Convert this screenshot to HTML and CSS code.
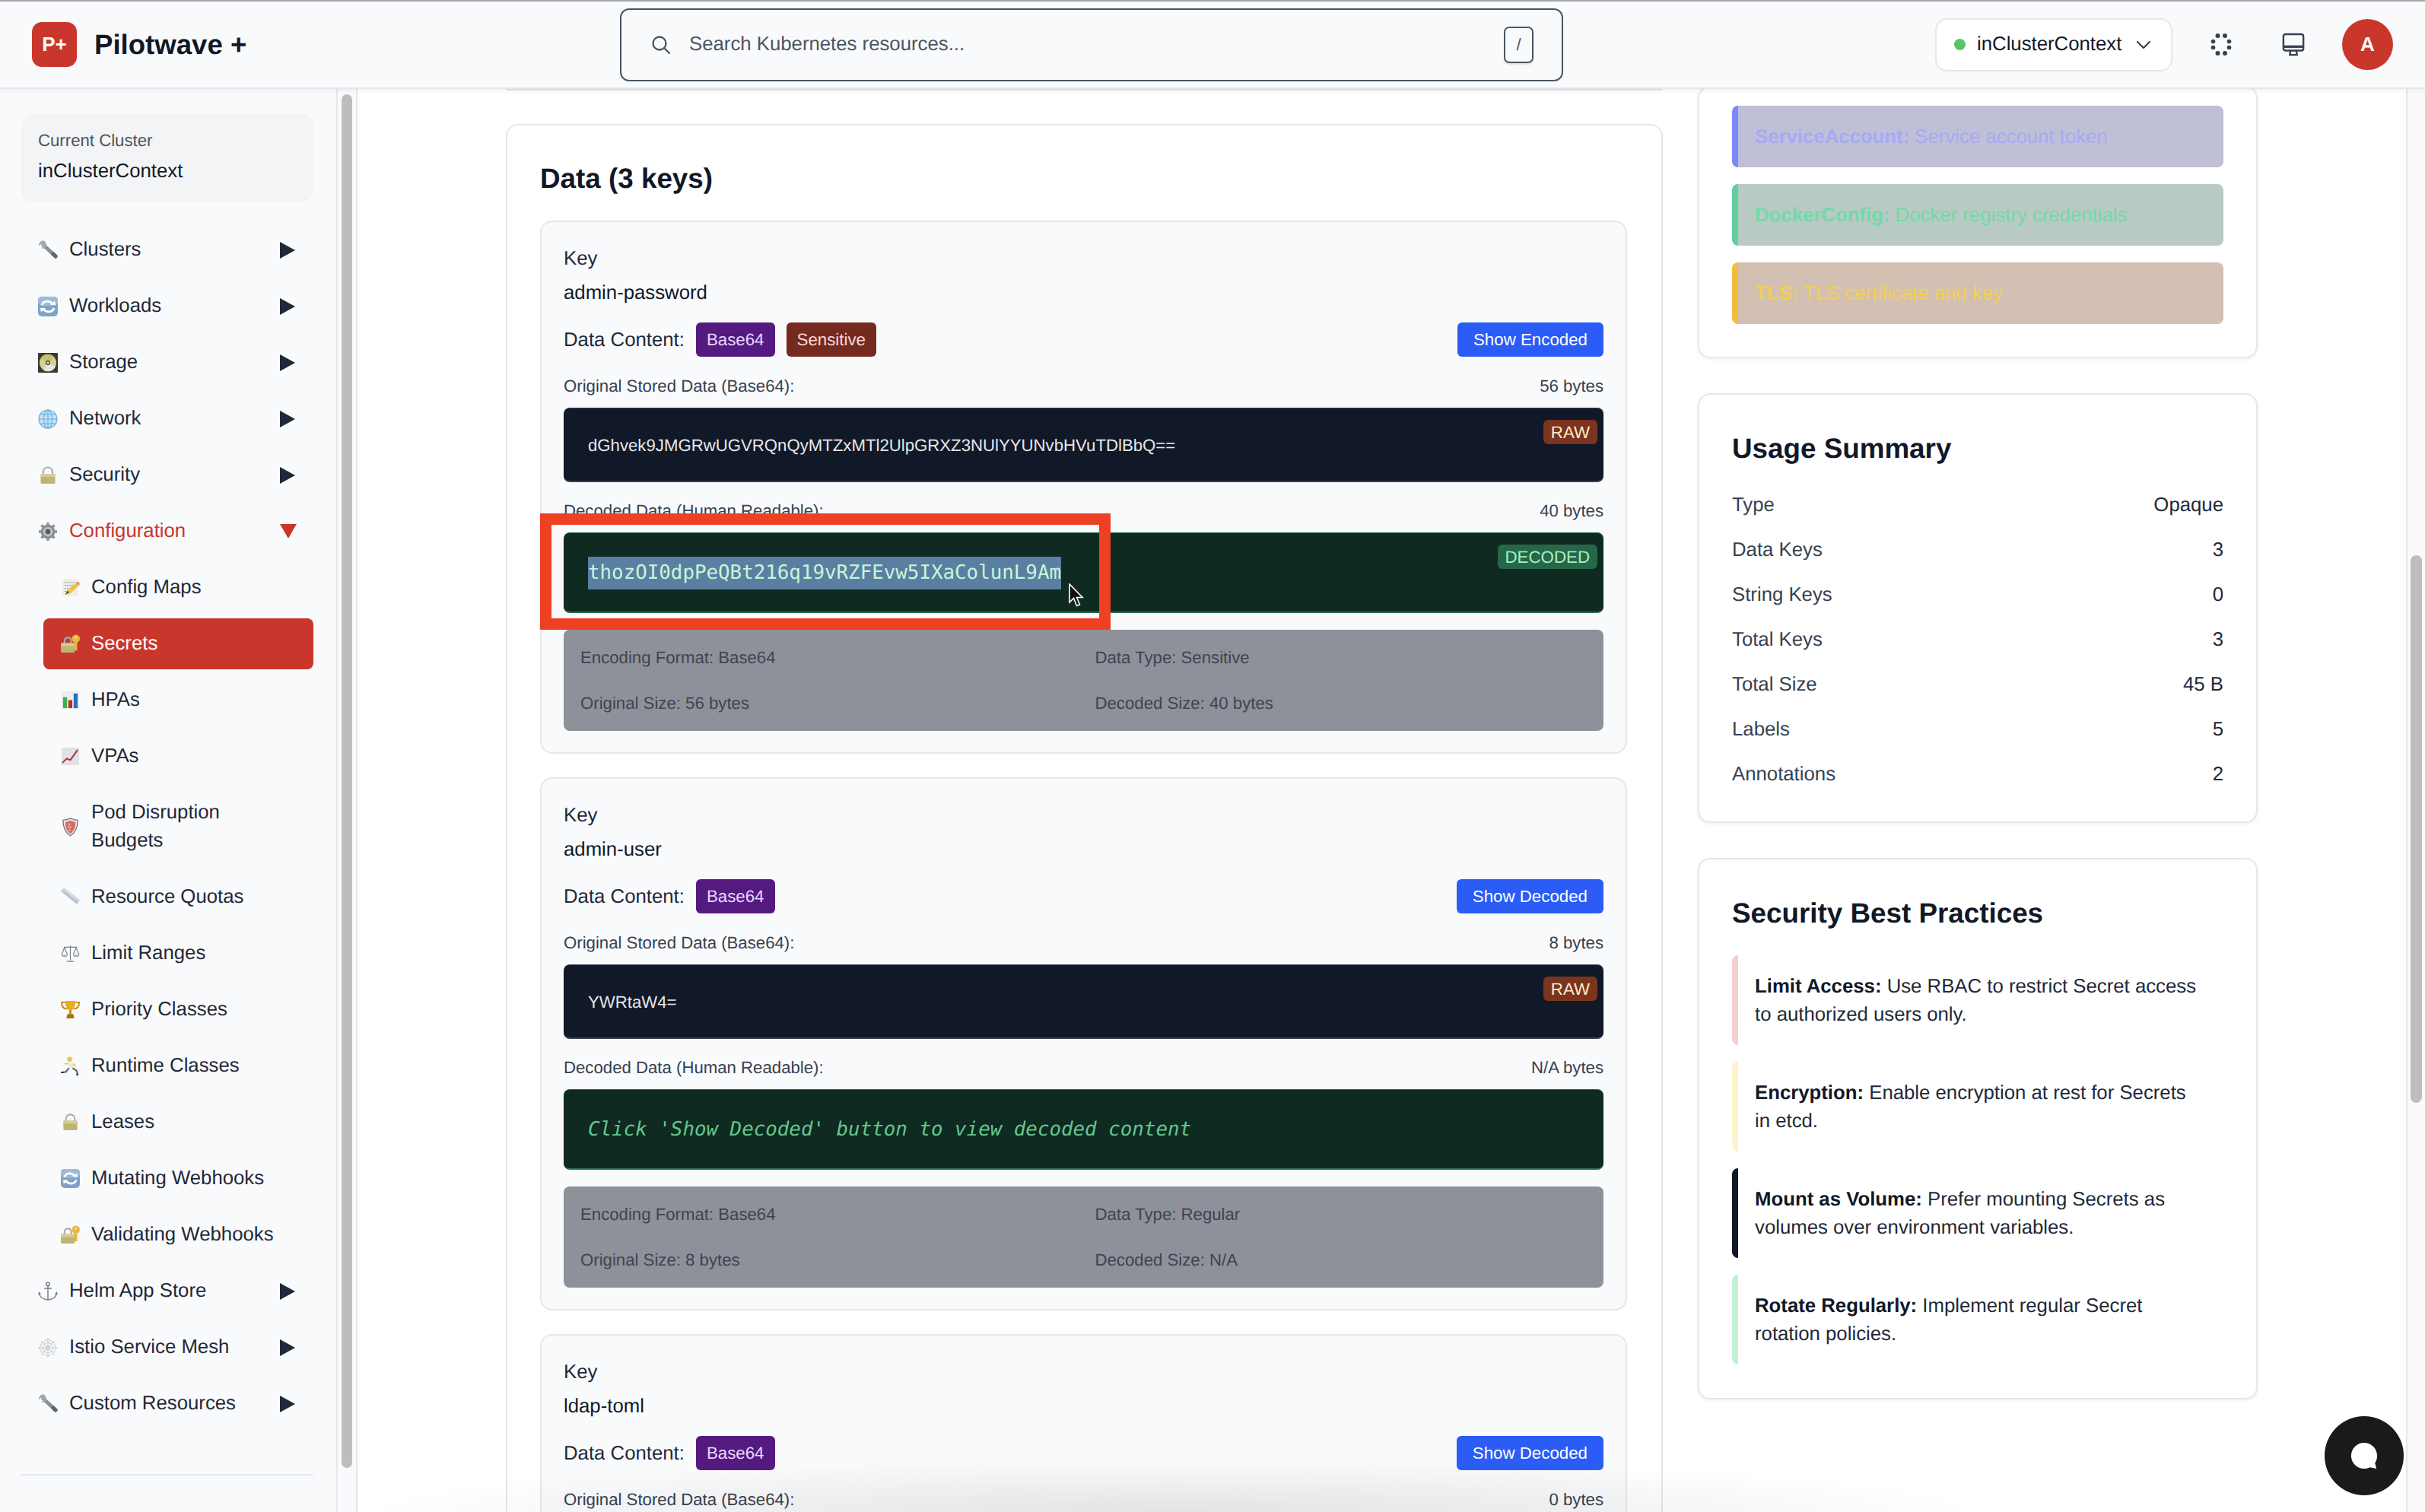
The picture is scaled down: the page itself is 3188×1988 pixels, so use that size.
FILE: index.html
```html
<!DOCTYPE html>
<html lang="en">
<head>
<meta charset="utf-8">
<title>Pilotwave + Secrets</title>
<link rel="stylesheet" href="styles.css">
</head>
<body>
<svg class="defs" aria-hidden="true">
  <symbol id="i-wrench" viewBox="0 0 26 26"><path d="M7 6 L23 21" stroke="#8b9097" stroke-width="5" stroke-linecap="round"/><path d="M8.500 .8 C4.500 -.4 .4 3 1 7.500 L4 4.800 L7.200 7.400 L4.500 10.400 C8.500 11.600 12 8 10.600 4.600 Z" fill="#a3a9af"/><path d="M20 18 L23 21" stroke="#5f646b" stroke-width="5" stroke-linecap="round"/></symbol>
  <symbol id="i-sync" viewBox="0 0 26 26"><rect x="0" y="0" width="26" height="26" rx="5" fill="#7fa2c8"/><rect x="0" y="0" width="26" height="12" rx="5" fill="#9dbad8"/><path d="M5 11 C7 5 15 4.500 19 9.500 M21 15 C19 21 11 21.500 7 16.500" stroke="#fff" stroke-width="2.800" fill="none"/><path d="M16 11 H23 L22 5.500 Z M10 15 H3 L4 20.500 Z" fill="#fff"/></symbol>
  <symbol id="i-disc" viewBox="0 0 26 26"><rect x="0" y="0" width="26" height="26" rx="1" fill="#3a3a34"/><circle cx="13" cy="13" r="11" fill="#d8cf9c"/><path d="M13 13 L3 8 A11 11 0 0 1 22 6.500 Z" fill="#c9c06a"/><path d="M13 13 L23 18 A11 11 0 0 1 7 22.500 Z" fill="#e8e6da"/><circle cx="13" cy="13" r="3.200" fill="#6b6a55"/><circle cx="13" cy="13" r="1.200" fill="#eee"/></symbol>
  <symbol id="i-globe" viewBox="0 0 26 26"><circle cx="13" cy="13" r="12" fill="#c3e2f3"/><g fill="none" stroke="#6ab0d9" stroke-width="1.200"><circle cx="13" cy="13" r="12"/><ellipse cx="13" cy="13" rx="5.500" ry="12"/><path d="M13 1 V25 M1 13 H25 M3 7 H23 M3 19 H23"/></g></symbol>
  <symbol id="i-lock" viewBox="0 0 26 26"><path d="M7 12 V8.500 C7 .5 19 .5 19 8.500 V12" fill="none" stroke="#a9adb0" stroke-width="2.200"/><rect x="3.500" y="11" width="19" height="13" rx="1.500" fill="#bdb574"/><rect x="3.500" y="11" width="19" height="4" rx="1.500" fill="#d4cd95"/></symbol>
  <symbol id="i-gear" viewBox="0 0 26 26"><circle cx="13" cy="13" r="9.500" fill="#8d9196"/><g stroke="#8d9196" stroke-width="3.400"><path d="M13 1 V25 M1 13 H25 M4.500 4.500 L21.500 21.500 M21.500 4.500 L4.500 21.500"/></g><circle cx="13" cy="13" r="6" fill="#c4c7ca"/><circle cx="13" cy="13" r="3.400" fill="#55585c"/></symbol>
  <symbol id="i-memo" viewBox="0 0 26 26"><rect x="2" y="1" width="21" height="24" fill="#eeeeea"/><path d="M5 6 H19 M5 10 H17 M5 14 H12 M5 18 H9" stroke="#9a9a96" stroke-width="1.200" stroke-dasharray="2 1"/><path d="M6 23 L9 17 L21 6 L25 10 L13 21 Z" fill="#eec344"/><path d="M21 6 L25 10 L26 8 L23.500 5 Z" fill="#d9787a"/><path d="M6 23 L9 17 L11 20 Z" fill="#4a4a44"/></symbol>
  <symbol id="i-lockkey" viewBox="0 0 26 26"><path d="M5 13 V9 C5 3 14 3 14 9 V13" fill="none" stroke="#a9adb0" stroke-width="2.200"/><rect x="0" y="12" width="19" height="13" rx="1.500" fill="#bdb574"/><rect x="0" y="12" width="19" height="4" rx="1.500" fill="#d4cd95"/><circle cx="20.500" cy="6" r="5.500" fill="#eab53c"/><rect x="18.700" y="8" width="3.600" height="14" fill="#eab53c"/><circle cx="20.500" cy="4.400" r="1.400" fill="#f8e9b8"/></symbol>
  <symbol id="i-bars" viewBox="0 0 26 26"><rect x="1" y="1" width="24" height="24" fill="#eceef0"/><rect x="3" y="9" width="5.500" height="15" fill="#3fae49"/><rect x="10.200" y="13" width="5.500" height="11" fill="#b5302a"/><rect x="17.500" y="4" width="5.500" height="20" fill="#2f6cc0"/></symbol>
  <symbol id="i-line" viewBox="0 0 26 26"><rect x="1" y="1" width="24" height="24" fill="#dfe2e6"/><path d="M2 22 L8 16 L13 18 L23 4" fill="none" stroke="#b5302a" stroke-width="2"/></symbol>
  <symbol id="i-shield" viewBox="0 0 26 26"><path d="M13 1 C17 3 20 3.500 23 3.500 C23 13 21 20 13 25 C5 20 3 13 3 3.500 C6 3.500 9 3 13 1 Z" fill="#e9e9e9" stroke="#74777b" stroke-width="1.400"/><path d="M13 4 C16 5.500 18 6 20 6 C20 13 18.500 18 13 22 C7.500 18 6 13 6 6 C8 6 10 5.500 13 4 Z" fill="#d96c60"/><path d="M10 9 H13 M10 13 H14 M11 17 H13" stroke="#f1d8d4" stroke-width="1.400"/></symbol>
  <symbol id="i-ruler" viewBox="0 0 26 26"><path d="M0 5 L4 0 L26 17 L22 23 Z" fill="#b8c3d2"/><path d="M4 0 L26 17 L24 19.500 L2 2.500 Z" fill="#d4dae3"/></symbol>
  <symbol id="i-scale" viewBox="0 0 26 26"><g fill="none" stroke="#7c8086" stroke-width="1.200"><path d="M13 2 V23 M4 4.500 H22 M8 24 H18 M5 5 L1 15 M5 5 L9 15 M21 5 L17 15 M21 5 L25 15"/></g><path d="M.5 15 H9.500 C9 19 1 19 .5 15 Z M16.500 15 H25.500 C25 19 17 19 16.500 15 Z" fill="#a9adb2"/></symbol>
  <symbol id="i-trophy" viewBox="0 0 26 26"><path d="M6 3 H1 C1 9 4 11.500 8 12 M20 3 H25 C25 9 22 11.500 18 12" fill="none" stroke="#c08a17" stroke-width="2"/><path d="M6 1 H20 C20 10 17 14 13 14.500 C9 14 6 10 6 1 Z" fill="#e8ae22"/><rect x="11.500" y="14" width="3" height="5" fill="#c08a17"/><path d="M7.500 25 L9 19 H17 L18.500 25 Z" fill="#a57412"/></symbol>
  <symbol id="i-run" viewBox="0 0 26 26"><circle cx="12" cy="3.800" r="3.400" fill="#eec34e"/><path d="M9 8 L17 9 L17 16 L11 17 Z" fill="#e8e8e4"/><path d="M10 10 L5 10 M17 10 L20 14" stroke="#eec34e" stroke-width="2"/><path d="M11 16 L7 21 L1 22 M16 16 L21 19 L23 24" fill="none" stroke="#5a6170" stroke-width="2.200"/><path d="M0 22 H4 M21 25 H24" stroke="#2f3a55" stroke-width="2"/></symbol>
  <symbol id="i-anchor" viewBox="0 0 26 26"><g fill="none" stroke="#7a7f85" stroke-width="1.500"><circle cx="13" cy="3.500" r="2.200"/><path d="M13 6 V24 M8 9 H18"/><path d="M1.500 15 C2 21 8 24 13 24 C18 24 24 21 24.500 15"/></g><path d="M0 17 L1.500 13 L4 17 Z M22 17 L24.500 13 L26 17 Z" fill="#7a7f85"/></symbol>
  <symbol id="i-web" viewBox="0 0 26 26"><g fill="none" stroke="#c5c9cd" stroke-width="1"><path d="M13 0 V26 M0 13 H26 M4 4 L22 22 M22 4 L4 22"/><path d="M13 2 L20.500 5.500 L24 13 L20.500 20.500 L13 24 L5.500 20.500 L2 13 L5.500 5.500 Z"/><path d="M13 6 L18 8 L20 13 L18 18 L13 20 L8 18 L6 13 L8 8 Z"/><path d="M13 10 L15 11 L16 13 L15 15 L13 16 L11 15 L10 13 L11 11 Z"/></g></symbol>
</svg>

<div class="app">
  <header class="topbar">
    <div class="brand">
      <div class="logo">P+</div>
      <div class="brand-name">Pilotwave +</div>
    </div>
    <div class="search">
      <svg class="search-icon" viewBox="0 0 26 26" fill="none" stroke="#4b5563" stroke-width="2.300" stroke-linecap="round"><circle cx="11" cy="11" r="8.500"/><path d="M17.500 17.500 L24 24"/></svg>
      <span class="search-text">Search Kubernetes resources...</span>
      <span class="kbd">/</span>
    </div>
    <div class="top-right">
      <div class="ctx">
        <span class="ctx-dot"></span>
        <span class="ctx-name">inClusterContext</span>
        <svg class="ctx-chev" viewBox="0 0 20 12" fill="none" stroke="#374151" stroke-width="2.200" stroke-linecap="round" stroke-linejoin="round"><path d="M2 2 L10 10 L18 2"/></svg>
      </div>
      <div class="icon-btn">
        <svg class="tb-icon" viewBox="0 0 30 30" fill="#374151"><circle cx="10.500" cy="3.500" r="3"/><circle cx="20" cy="3.500" r="3"/><circle cx="4.500" cy="11" r="2.800"/><circle cx="25.500" cy="11" r="2.800"/><circle cx="4.500" cy="19" r="2.800"/><circle cx="25.500" cy="19" r="2.800"/><circle cx="10.500" cy="26.500" r="3"/><circle cx="20" cy="26.500" r="3"/></svg>
      </div>
      <div class="icon-btn">
        <svg class="tb-icon" viewBox="0 0 32 32" fill="none" stroke="#374151" stroke-width="2.600"><rect x="2" y="1.500" width="28" height="23" rx="3"/><path d="M2 19 H30" stroke-width="3.500"/><path d="M12 24 L11 30.500 H21 L20 24" /></svg>
      </div>
      <div class="avatar">A</div>
    </div>
  </header>

  <div class="body">
    <aside class="sidebar">
      <div class="side-col">
        <div class="cluster-card">
          <div class="cluster-label">Current Cluster</div>
          <div class="cluster-name">inClusterContext</div>
        </div>
        <nav class="nav">
          <a class="nav-item"><svg class="ico"><use href="#i-wrench"/></svg><span class="nav-label">Clusters</span><span class="caret"></span></a>
          <a class="nav-item"><svg class="ico"><use href="#i-sync"/></svg><span class="nav-label">Workloads</span><span class="caret"></span></a>
          <a class="nav-item"><svg class="ico"><use href="#i-disc"/></svg><span class="nav-label">Storage</span><span class="caret"></span></a>
          <a class="nav-item"><svg class="ico"><use href="#i-globe"/></svg><span class="nav-label">Network</span><span class="caret"></span></a>
          <a class="nav-item"><svg class="ico"><use href="#i-lock"/></svg><span class="nav-label">Security</span><span class="caret"></span></a>
          <a class="nav-item open"><svg class="ico"><use href="#i-gear"/></svg><span class="nav-label">Configuration</span><span class="caret-down"></span></a>
          <a class="nav-item sub"><svg class="ico"><use href="#i-memo"/></svg><span class="nav-label">Config Maps</span></a>
          <a class="nav-item sub active"><svg class="ico"><use href="#i-lockkey"/></svg><span class="nav-label">Secrets</span></a>
          <a class="nav-item sub"><svg class="ico"><use href="#i-bars"/></svg><span class="nav-label">HPAs</span></a>
          <a class="nav-item sub"><svg class="ico"><use href="#i-line"/></svg><span class="nav-label">VPAs</span></a>
          <a class="nav-item sub"><svg class="ico"><use href="#i-shield"/></svg><span class="nav-label">Pod Disruption Budgets</span></a>
          <a class="nav-item sub"><svg class="ico"><use href="#i-ruler"/></svg><span class="nav-label">Resource Quotas</span></a>
          <a class="nav-item sub"><svg class="ico"><use href="#i-scale"/></svg><span class="nav-label">Limit Ranges</span></a>
          <a class="nav-item sub"><svg class="ico"><use href="#i-trophy"/></svg><span class="nav-label">Priority Classes</span></a>
          <a class="nav-item sub"><svg class="ico"><use href="#i-run"/></svg><span class="nav-label">Runtime Classes</span></a>
          <a class="nav-item sub"><svg class="ico"><use href="#i-lock"/></svg><span class="nav-label">Leases</span></a>
          <a class="nav-item sub"><svg class="ico"><use href="#i-sync"/></svg><span class="nav-label">Mutating Webhooks</span></a>
          <a class="nav-item sub"><svg class="ico"><use href="#i-lockkey"/></svg><span class="nav-label">Validating Webhooks</span></a>
          <a class="nav-item"><svg class="ico"><use href="#i-anchor"/></svg><span class="nav-label">Helm App Store</span><span class="caret"></span></a>
          <a class="nav-item"><svg class="ico"><use href="#i-web"/></svg><span class="nav-label">Istio Service Mesh</span><span class="caret"></span></a>
          <a class="nav-item"><svg class="ico"><use href="#i-wrench"/></svg><span class="nav-label">Custom Resources</span><span class="caret"></span></a>
        </nav>
        <div class="side-divider"></div>
      </div>
      <div class="side-track"><div class="side-thumb"></div></div>
    </aside>

    <main class="main">
      <div class="left-col">
        <div class="stub-card"></div>
        <section class="data-card">
          <h2 class="card-title data-title">Data (3 keys)</h2>

          <article class="key-card">
            <div class="key-label">Key</div>
            <div class="key-value">admin-password</div>
            <div class="content-row">
              <span class="content-label">Data Content:</span>
              <span class="badge purple">Base64</span>
              <span class="badge maroon">Sensitive</span>
              <button class="toggle">Show Encoded</button>
            </div>
            <div class="meta-row"><span>Original Stored Data (Base64):</span><span>56 bytes</span></div>
            <div class="code raw">dGhvek9JMGRwUGVRQnQyMTZxMTl2UlpGRXZ3NUlYYUNvbHVuTDlBbQ==<span class="tag tag-raw">RAW</span></div>
            <div class="meta-row meta-decoded"><span>Decoded Data (Human Readable):</span><span>40 bytes</span></div>
            <div class="code decoded"><span class="selected">thozOI0dpPeQBt216q19vRZFEvw5IXaColunL9Am</span><span class="tag tag-decoded">DECODED</span></div>
            <div class="info">
              <span>Encoding Format: Base64</span><span>Data Type: Sensitive</span>
              <span>Original Size: 56 bytes</span><span>Decoded Size: 40 bytes</span>
            </div>
            <div class="highlight"></div>
            <svg class="cursor" viewBox="0 0 22 32"><path d="M2 1 V25 L7.500 19.500 L11.500 29.500 L15.500 28 L11.500 18.500 L19 18.500 Z" fill="#111" stroke="#fff" stroke-width="1.600"/></svg>
          </article>

          <article class="key-card">
            <div class="key-label">Key</div>
            <div class="key-value">admin-user</div>
            <div class="content-row">
              <span class="content-label">Data Content:</span>
              <span class="badge purple">Base64</span>
              <button class="toggle">Show Decoded</button>
            </div>
            <div class="meta-row"><span>Original Stored Data (Base64):</span><span>8 bytes</span></div>
            <div class="code raw">YWRtaW4=<span class="tag tag-raw">RAW</span></div>
            <div class="meta-row meta-decoded"><span>Decoded Data (Human Readable):</span><span>N/A bytes</span></div>
            <div class="code decoded"><em class="placeholder">Click 'Show Decoded' button to view decoded content</em></div>
            <div class="info">
              <span>Encoding Format: Base64</span><span>Data Type: Regular</span>
              <span>Original Size: 8 bytes</span><span>Decoded Size: N/A</span>
            </div>
          </article>

          <article class="key-card">
            <div class="key-label">Key</div>
            <div class="key-value">ldap-toml</div>
            <div class="content-row">
              <span class="content-label">Data Content:</span>
              <span class="badge purple">Base64</span>
              <button class="toggle">Show Decoded</button>
            </div>
            <div class="meta-row"><span>Original Stored Data (Base64):</span><span>0 bytes</span></div>
          </article>
        </section>
      </div>

      <div class="right-col">
        <section class="side-card types-card">
          <div class="type-item violet"><b>ServiceAccount:</b> Service account token</div>
          <div class="type-item green"><b>DockerConfig:</b> Docker registry credentials</div>
          <div class="type-item amber"><b>TLS:</b> TLS certificate and key</div>
        </section>
        <section class="side-card">
          <h2 class="card-title">Usage Summary</h2>
          <dl class="summary">
            <div class="sum-row"><dt>Type</dt><dd>Opaque</dd></div>
            <div class="sum-row"><dt>Data Keys</dt><dd>3</dd></div>
            <div class="sum-row"><dt>String Keys</dt><dd>0</dd></div>
            <div class="sum-row"><dt>Total Keys</dt><dd>3</dd></div>
            <div class="sum-row"><dt>Total Size</dt><dd>45 B</dd></div>
            <div class="sum-row"><dt>Labels</dt><dd>5</dd></div>
            <div class="sum-row"><dt>Annotations</dt><dd>2</dd></div>
          </dl>
        </section>
        <section class="side-card">
          <h2 class="card-title">Security Best Practices</h2>
          <div class="tips">
            <div class="tip pink"><b>Limit Access:</b> Use RBAC to restrict Secret access to authorized users only.</div>
            <div class="tip cream"><b>Encryption:</b> Enable encryption at rest for Secrets in etcd.</div>
            <div class="tip dark"><b>Mount as Volume:</b> Prefer mounting Secrets as volumes over environment variables.</div>
            <div class="tip mint"><b>Rotate Regularly:</b> Implement regular Secret rotation policies.</div>
          </div>
        </section>
      </div>
    </main>

    <div class="main-track"><div class="main-thumb"></div></div>
  </div>

  <div class="bottom-shade"></div>
  <div class="chat">
    <svg class="chat-icon" viewBox="0 0 40 40"><path d="M20 2 C30 2 38 10 38 20 C38 24 37 27 35 30 L37 38 L28 36 C26 37 23 38 20 38 C10 38 2 30 2 20 C2 10 10 2 20 2 Z" fill="#fff"/></svg>
  </div>
</div>
</body>
</html>
```

FILE: styles.css
```css
* { box-sizing: border-box; }
html, body { margin: 0; height: 100%; overflow: hidden; }
body { font-family: "Liberation Sans", Arial, sans-serif; font-size: 25.75px; line-height: 37px; color: #111827; background: #fff; text-rendering: geometricPrecision; }
.defs { position: absolute; width: 0; height: 0; }
.app { position: relative; height: 100vh; display: flex; flex-direction: column; overflow: hidden; }

/* Top bar */
.topbar { position: relative; z-index: 3; flex: none; height: 117px; display: flex; align-items: center; background: #f9fafb; border-top: 2px solid #a3a6ab; border-bottom: 2px solid #e5e7eb; padding: 0 42px; box-shadow: 0 3px 6px rgba(0,0,0,.05); }
.brand { width: 773px; display: flex; align-items: center; gap: 23px; flex: none; }
.logo { width: 59px; height: 59px; border-radius: 13px; background: #c9372c; color: #fff; font-weight: 700; font-size: 26px; display: flex; align-items: center; justify-content: center; }
.brand-name { font-size: 36.6px; font-weight: 700; color: #111827; }
.search { width: 1240px; height: 96px; flex: none; display: flex; align-items: center; padding: 0 37px 0 39px; border: 2px solid #4b5563; border-radius: 12px; background: #f9fafb; }
.search-icon { width: 26px; height: 26px; flex: none; }
.search-text { margin-left: 24px; color: #4b5563; flex: 1; }
.kbd { width: 39px; height: 48px; border: 2px solid #4b5563; border-radius: 7px; display: flex; align-items: center; justify-content: center; font-size: 22px; color: #4b5563; box-shadow: 0 2px 2px rgba(0,0,0,.1); }
.top-right { margin-left: auto; display: flex; align-items: center; gap: 33px; }
.ctx { width: 312px; height: 70px; display: flex; align-items: center; padding-left: 23px; background: #fff; border: 2px solid #e5e7eb; border-radius: 16px; }
.ctx-dot { width: 15px; height: 15px; border-radius: 50%; background: #58c468; flex: none; }
.ctx-name { margin-left: 15px; color: #111827; }
.ctx-chev { width: 20px; height: 12px; margin-left: 19px; flex: none; }
.icon-btn { width: 62px; display: flex; justify-content: center; }
.tb-icon { width: 30px; height: 31px; display: block; }
.avatar { width: 67px; height: 67px; border-radius: 50%; background: #c9372c; color: #fff; font-weight: 700; font-size: 26px; display: flex; align-items: center; justify-content: center; }

/* Shell */
.body { flex: 1; min-height: 0; display: flex; }

/* Sidebar */
.sidebar { width: 470px; flex: none; display: flex; background: #f9fafb; overflow: hidden; }
.side-col { width: 444px; flex: none; padding: 32px 30px 0 28px; border-right: 2px solid #e5e7eb; height: 100%; overflow: hidden; }
.cluster-card { height: 117px; padding: 17px 22px; background: #f3f4f6; border-radius: 16px; }
.cluster-label { font-size: 22.2px; line-height: 37px; color: #4b5563; }
.cluster-name { line-height: 45px; color: #111827; }
.nav { margin-top: 29px; display: flex; flex-direction: column; gap: 7px; }
.nav-item { display: flex; align-items: center; padding: 15px 24px 15px 22px; border-radius: 8px; color: #1f2937; }
.nav-item.sub { margin-left: 29px; padding: 15px 48px 15px 23px; }
.nav-item.open { color: #c9372c; }
.nav-item.active { background: #c9372c; color: #fff; }
.ico { width: 26px; height: 26px; flex: none; margin-right: 15px; }
.nav-item.sub .ico { width: 25px; height: 25px; }
.nav-label { flex: 1; }
.caret { width: 0; height: 0; border-left: 20px solid #1f2937; border-top: 11px solid transparent; border-bottom: 11px solid transparent; flex: none; }
.caret-down { width: 0; height: 0; border-top: 19px solid #c9372c; border-left: 11px solid transparent; border-right: 11px solid transparent; flex: none; margin-right: -2px; }
.side-divider { height: 2px; background: #e5e7eb; margin-top: 59px; }
.side-track { width: 26px; flex: none; border-right: 2px solid #e5e7eb; background: #f9fafb; padding: 7px 0 0 5px; }
.side-thumb { width: 14px; height: 1806px; border-radius: 7px; background: #bdbdbd; }

/* Main */
.main { flex: 1; min-width: 0; display: flex; gap: 46px; padding-left: 195px; overflow: hidden; background: #fff; }
.left-col { width: 1521px; flex: none; display: flex; flex-direction: column; }
.stub-card { height: 2px; background: #e5e7eb; border-radius: 0 0 16px 16px; margin-bottom: 44px; flex: none; }
.data-card { flex: none; padding: 48px 45px 0 43px; background: #fff; border: 2px solid #e5e7eb; border-bottom: 0; border-radius: 16px 16px 0 0; }
.card-title { margin: 0; font-size: 36.8px; line-height: 44px; font-weight: 700; color: #111827; }
.data-title { margin-bottom: 33px; }
.key-card { position: relative; margin-bottom: 31px; padding: 30px 29px 28px; background: #f9fafb; border: 2px solid #e5e7eb; border-radius: 16px; }
.key-label { line-height: 37px; color: #1f2937; }
.key-value { margin-top: 8px; line-height: 37px; color: #111827; }
.content-row { margin-top: 20px; height: 45px; display: flex; align-items: center; gap: 15px; }
.content-label { padding-top: 2px; color: #1f2937; }
.badge { height: 45px; padding: 0 14px; border-radius: 6px; display: flex; align-items: center; font-size: 22.3px; }
.purple { background: #551a80; color: #e9d8fd; }
.maroon { background: #742a1f; color: #fed7d7; }
.toggle { margin-left: auto; height: 45px; padding: 0 21px; border: 0; border-radius: 6px; background: #2b5cf5; color: #fff; font: inherit; font-size: 22.3px; }
.meta-row { margin-top: 22px; display: flex; justify-content: space-between; font-size: 22.2px; line-height: 33px; color: #374151; }
.meta-decoded { margin-top: 21px; }
.code { position: relative; margin-top: 12px; padding: 2px 32px 0; border-radius: 8px; display: flex; align-items: center; }
.raw { height: 98px; background: #111827; border: 2px solid #374151; border-width: 1px 0 2px; color: #e5e7eb; font-size: 22.2px; }
.decoded { height: 106px; background: #0f2a20; border: 2px solid #2a6a50; border-width: 1px 0 2px; color: #c6f6d5; font-family: "DejaVu Sans Mono", monospace; font-size: 25.83px; }
.selected { display: inline-block; height: 43px; line-height: 43px; background: #5a7fa3; }
.placeholder { color: #63c78f; font-style: italic; }
.tag { position: absolute; top: 15px; right: 8px; height: 32px; padding: 0 10px; border-radius: 6px; display: flex; align-items: center; font-family: "Liberation Sans", Arial, sans-serif; font-size: 22.3px; }
.tag-raw { background: #7b341e; color: #feebc8; }
.tag-decoded { background: #276749; color: #a8eec2; }
.info { margin-top: 22px; height: 133px; padding: 20px 22px; display: grid; grid-template-columns: 1fr 1fr; column-gap: 30px; row-gap: 26px; border-radius: 8px; background: #8e9199; color: #3e4452; font-size: 22.2px; line-height: 33px; }
.highlight { position: absolute; left: -2px; top: 383px; width: 750px; height: 153px; border: 15px solid #ee4023; }
.cursor { position: absolute; left: 692px; top: 475px; width: 22px; height: 32px; }

/* Right column */
.right-col { width: 736px; flex: none; margin-top: -4px; display: flex; flex-direction: column; gap: 46px; }
.side-card { flex: none; padding: 49px 43px 44px; background: #fff; border: 2px solid #e5e7eb; border-radius: 16px; box-shadow: 0 2px 5px rgba(0,0,0,.05); }
.types-card { padding-top: 24px; padding-bottom: 43px; display: flex; flex-direction: column; gap: 22px; }
.type-item { height: 81px; padding-left: 22px; line-height: 82px; border-radius: 8px; border-left: 8px solid; }
.violet { background: #bfc0d7; border-color: #7f86f7; color: #a5aaf5; }
.green { background: #b9c9c3; border-color: #5fd09a; color: #6fdca8; }
.amber { background: #d3c0b3; border-color: #f5bb3e; color: #f3cf51; }
.summary { margin: 34px 0 -1px; display: flex; flex-direction: column; gap: 22px; }
.sum-row { display: flex; justify-content: space-between; }
.sum-row dt { color: #374151; }
.sum-row dd { margin: 0; color: #1f2937; }
.tips { margin-top: 33px; display: flex; flex-direction: column; gap: 22px; }
.tip { min-height: 118px; padding: 23px 30px 21px 22px; border-radius: 8px; border-left: 8px solid; color: #1f2937; }
.tip b { color: #111827; }
.pink { border-color: #f5cfcd; }
.cream { border-color: #fdf3cd; }
.dark { border-color: #111827; }
.mint { border-color: #c4f0d4; }

/* Main scrollbar */
.main-track { width: 25px; flex: none; border-left: 2px solid #e5e7eb; background: #fafafa; padding: 613px 0 0 4px; }
.main-thumb { width: 15px; height: 720px; border-radius: 8px; background: #bdbdbd; }

/* Overlays */
.bottom-shade { position: absolute; left: 470px; bottom: 0; width: 2150px; height: 70px; pointer-events: none; background: radial-gradient(ellipse 50% 100% at 50% 100%, rgba(0,0,0,.09), rgba(0,0,0,0)); }
.chat { position: absolute; left: 3056px; top: 1862px; width: 104px; height: 104px; border-radius: 50%; background: #1a1a1a; display: flex; align-items: center; justify-content: center; }
.chat-icon { width: 38px; height: 38px; }
```
